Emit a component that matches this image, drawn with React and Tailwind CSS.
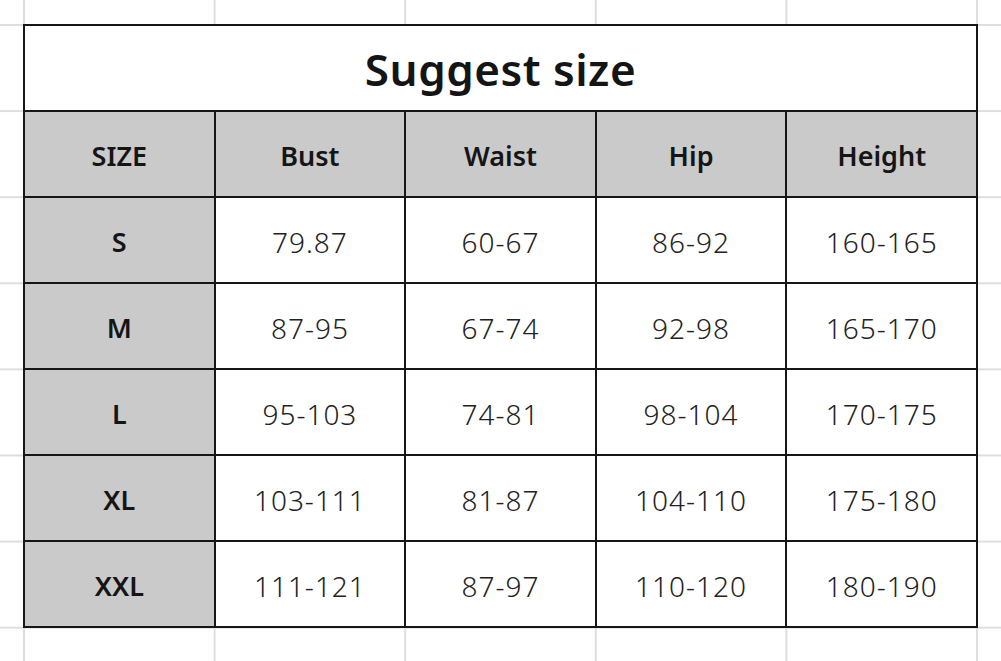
import React from 'react';

const headers = ['SIZE', 'Bust', 'Waist', 'Hip', 'Height'];

const rows = [
  ['S', '79.87', '60-67', '86-92', '160-165'],
  ['M', '87-95', '67-74', '92-98', '165-170'],
  ['L', '95-103', '74-81', '98-104', '170-175'],
  ['XL', '103-111', '81-87', '104-110', '175-180'],
  ['XXL', '111-121', '87-97', '110-120', '180-190'],
];

const App = () => {
  return (
    <div className="h-[661px] w-full overflow-hidden bg-white bg-[linear-gradient(to_right,#dedede_2px,transparent_2px),linear-gradient(to_bottom,#dedede_2px,transparent_2px)] bg-size-[190.6px_86.1px] bg-position-[23px_24px] pl-[23px] pt-[24px] font-['Noto_Sans',sans-serif] text-[#151515]">
      <div className="grid w-[955px] grid-cols-5 gap-[2px] bg-[#161616] p-[2px]">
        <div className="col-span-5 flex h-[84px] items-center justify-center bg-white pt-[2px] text-[44px] font-semibold tracking-[0.5px]">
          Suggest size
        </div>
        {headers.map((h) => (
          <div key={h} className="flex h-[84px] items-center justify-center bg-[#cacaca] pt-[4px] text-[27px] font-semibold">
            {h}
          </div>
        ))}
        {rows.map((row) => (
          <React.Fragment key={row[0]}>
            {row.map((cell, i) => (
              <div
                key={i}
                className={
                  i === 0
                    ? 'flex h-[84px] items-center justify-center bg-[#cacaca] pt-[4px] text-[27px] font-semibold'
                    : 'flex h-[84px] items-center justify-center bg-white pt-[4px] text-[28px] font-light tracking-[1px] text-[#222]'
                }
              >
                {cell}
              </div>
            ))}
          </React.Fragment>
        ))}
      </div>
    </div>
  );
};

export default App;
